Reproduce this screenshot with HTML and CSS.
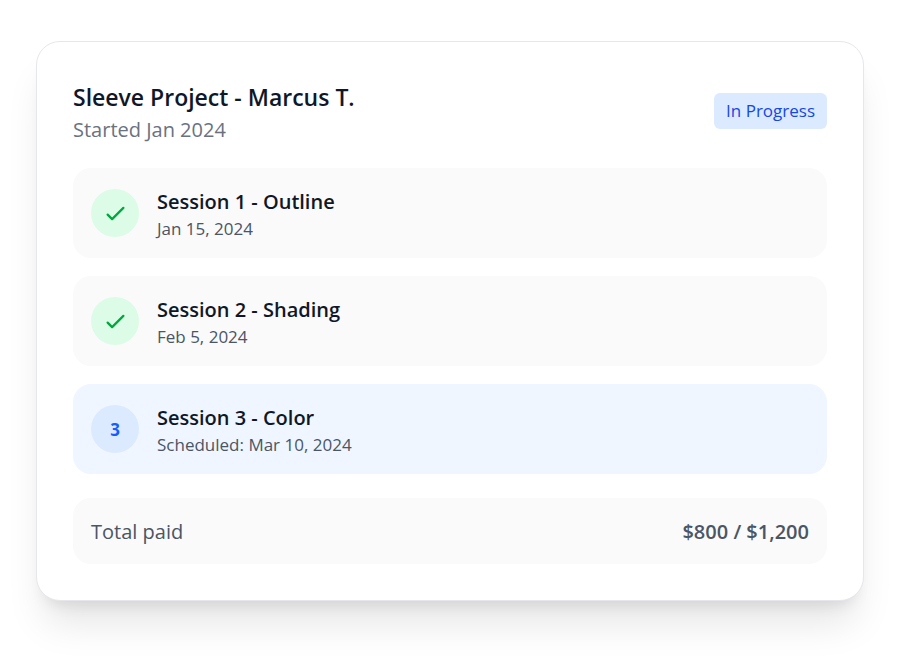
FILE: index.html
```html
<!DOCTYPE html>
<html lang="en">
    <head>
        <meta charset="utf-8">
        <meta name="viewport" content="width=device-width, initial-scale=1">
        <title>Sleeve Project</title>
        <link rel="stylesheet" href="styles.css">
    </head>

    <body>
        <main class="card">
            <header class="card-header">
                <div>
                    <h1 class="title">Sleeve Project - Marcus T.</h1>
                    <p class="started">Started Jan 2024</p>
                </div>
                <span class="status">In Progress</span>
            </header>

            <ol class="sessions">
                <li class="session">
                    <span class="marker done">
                        <svg class="check" viewBox="0 0 24 24" aria-hidden="true"><path d="M5 13l4 4L19 7"/></svg>
                    </span>
                    <div>
                        <h2 class="session-name">Session 1 - Outline</h2>
                        <p class="session-date">Jan 15, 2024</p>
                    </div>
                </li>
                <li class="session">
                    <span class="marker done">
                        <svg class="check" viewBox="0 0 24 24" aria-hidden="true"><path d="M5 13l4 4L19 7"/></svg>
                    </span>
                    <div>
                        <h2 class="session-name">Session 2 - Shading</h2>
                        <p class="session-date">Feb 5, 2024</p>
                    </div>
                </li>
                <li class="session next">
                    <span class="marker">3</span>
                    <div>
                        <h2 class="session-name">Session 3 - Color</h2>
                        <p class="session-date">Scheduled: Mar 10, 2024</p>
                    </div>
                </li>
            </ol>

            <div class="total">
                <span>Total paid</span>
                <strong class="amount">$800 / $1,200</strong>
            </div>
        </main>
    </body>
</html>
```

FILE: styles.css
```css
* {
    box-sizing: border-box;
    margin: 0;
    padding: 0;
}

body {
    padding: 41px 45px 60px 36px;
    background-color: #fff;
    color: #101828;
    font-family: "Segoe UI", "Open Sans", "Noto Sans", sans-serif;
}

.card {
    padding: 36px;
    border: 1px solid #e5e7eb;
    border-radius: 24px;
    background-color: #fff;
    box-shadow: 0 30px 38px -8px rgba(0, 0, 0, 0.1), 0 12px 15px -9px rgba(0, 0, 0, 0.1);
}

.card-header {
    display: flex;
    align-items: center;
    justify-content: space-between;
    margin-bottom: 24px;
}

.title {
    font-size: 23px;
    font-weight: 600;
    line-height: 38px;
}

.started {
    color: #6a7282;
    font-size: 20px;
    line-height: 28px;
}

.status {
    padding: 6px 12px;
    border-radius: 6px;
    background-color: #dbeafe;
    color: #1447e6;
    font-size: 17px;
    line-height: 24px;
}

.sessions {
    display: grid;
    gap: 18px;
    list-style: none;
}

.session {
    display: flex;
    align-items: center;
    gap: 18px;
    padding: 18px;
    border-radius: 18px;
    background-color: #fafafa;
}

.next {
    background-color: #eff6ff;
}

.marker {
    display: flex;
    align-items: center;
    justify-content: center;
    width: 48px;
    height: 48px;
    border-radius: 50%;
    background-color: #dbeafe;
    color: #155dfc;
    font-size: 17px;
    font-weight: 700;
}

.done {
    background-color: #dcfce7;
    color: #00a63e;
}

.check {
    width: 27px;
    height: 27px;
    fill: none;
    stroke: currentColor;
    stroke-width: 2;
    stroke-linecap: round;
    stroke-linejoin: round;
}

.session-name {
    font-size: 20px;
    font-weight: 600;
    line-height: 32px;
}

.session-date {
    color: #4a5565;
    font-size: 17px;
    line-height: 22px;
}

.total {
    display: flex;
    align-items: center;
    justify-content: space-between;
    margin-top: 24px;
    padding: 20px 18px 18px;
    border-radius: 18px;
    background-color: #fafafa;
    color: #4a5565;
    font-size: 20px;
    line-height: 28px;
}

.amount {
    font-weight: 600;
}
```
